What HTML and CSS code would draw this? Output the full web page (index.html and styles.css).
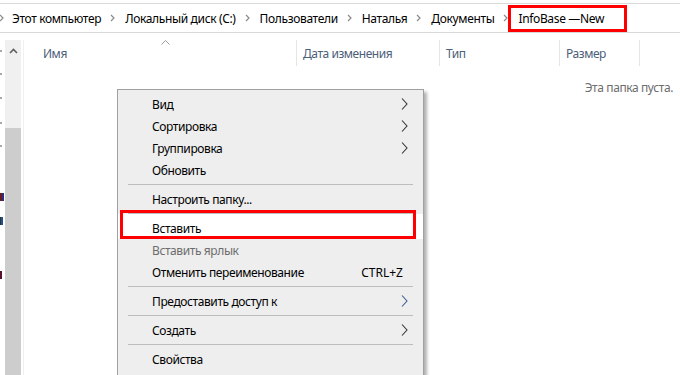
FILE: index.html
```html
<!DOCTYPE html>
<html lang="ru">
<head>
    <meta charset="UTF-8">
    <title>InfoBase —New</title>
    <link rel="stylesheet" href="styles.css">
</head>
<body>
    <div class="window">
        <div class="crumbs">
            <span class="sep"><svg width="5" height="8" viewBox="0 0 5 8"><path d="M1 1l3 3-3 3" fill="none" stroke="#8a8a8a" stroke-width="1.2"/></svg></span>
            <span class="crumb">Этот компьютер</span>
            <span class="sep"><svg width="5" height="8" viewBox="0 0 5 8"><path d="M1 1l3 3-3 3" fill="none" stroke="#8a8a8a" stroke-width="1.2"/></svg></span>
            <span class="crumb">Локальный диск (C:)</span>
            <span class="sep"><svg width="5" height="8" viewBox="0 0 5 8"><path d="M1 1l3 3-3 3" fill="none" stroke="#8a8a8a" stroke-width="1.2"/></svg></span>
            <span class="crumb">Пользователи</span>
            <span class="sep"><svg width="5" height="8" viewBox="0 0 5 8"><path d="M1 1l3 3-3 3" fill="none" stroke="#8a8a8a" stroke-width="1.2"/></svg></span>
            <span class="crumb">Наталья</span>
            <span class="sep"><svg width="5" height="8" viewBox="0 0 5 8"><path d="M1 1l3 3-3 3" fill="none" stroke="#8a8a8a" stroke-width="1.2"/></svg></span>
            <span class="crumb">Документы</span>
            <span class="sep"><svg width="5" height="8" viewBox="0 0 5 8"><path d="M1 1l3 3-3 3" fill="none" stroke="#8a8a8a" stroke-width="1.2"/></svg></span>
            <span class="crumb current">InfoBase —New</span>
        </div>

        <div class="main">
            <div class="nav-strip">
                <i class="dot"></i><i class="dot"></i><i class="dot"></i><i class="dot"></i><i class="dot"></i>
                <i class="frag frag-a"></i>
                <i class="frag frag-b"></i>
                <i class="frag frag-c"></i>
            </div>
            <div class="scrollbar">
                <div class="scroll-up">
                    <svg width="9" height="6" viewBox="0 0 9 6"><path d="M1 5l3.5-3.5L8 5" fill="none" stroke="#606060" stroke-width="1.6"/></svg>
                </div>
                <div class="scroll-thumb"></div>
            </div>
            <div class="content">
                <div class="header-row">
                    <div class="col col-name">Имя
                        <svg class="sort-arrow" width="9" height="5" viewBox="0 0 9 5"><path d="M0.5 4.5l4-4 4 4" fill="none" stroke="#9a9a9a" stroke-width="1"/></svg>
                    </div>
                    <div class="col col-date">Дата изменения</div>
                    <div class="col col-type">Тип</div>
                    <div class="col col-size">Размер</div>
                    <div class="col col-rest"></div>
                </div>
                <p class="empty">Эта папка пуста.</p>
            </div>
        </div>

        <div class="menu">
            <div class="item">Вид<span class="arrow"><svg width="7" height="12" viewBox="0 0 7 12"><path d="M1 0.5l5 5.5-5 5.5" fill="none" stroke="#333" stroke-width="1.1"/></svg></span></div>
            <div class="item">Сортировка<span class="arrow"><svg width="7" height="12" viewBox="0 0 7 12"><path d="M1 0.5l5 5.5-5 5.5" fill="none" stroke="#333" stroke-width="1.1"/></svg></span></div>
            <div class="item">Группировка<span class="arrow"><svg width="7" height="12" viewBox="0 0 7 12"><path d="M1 0.5l5 5.5-5 5.5" fill="none" stroke="#333" stroke-width="1.1"/></svg></span></div>
            <div class="item">Обновить</div>
            <div class="divider"></div>
            <div class="item">Настроить папку...</div>
            <div class="divider"></div>
            <div class="item active">Вставить</div>
            <div class="item disabled">Вставить ярлык</div>
            <div class="item">Отменить переименование<span class="shortcut">CTRL+Z</span></div>
            <div class="divider"></div>
            <div class="item">Предоставить доступ к<span class="arrow"><svg width="7" height="12" viewBox="0 0 7 12"><path d="M1 0.5l5 5.5-5 5.5" fill="none" stroke="#3a5c90" stroke-width="1.1"/></svg></span></div>
            <div class="divider"></div>
            <div class="item">Создать<span class="arrow"><svg width="7" height="12" viewBox="0 0 7 12"><path d="M1 0.5l5 5.5-5 5.5" fill="none" stroke="#333" stroke-width="1.1"/></svg></span></div>
            <div class="divider"></div>
            <div class="item">Свойства</div>
        </div>

        <div class="mark mark-path"></div>
        <div class="mark mark-paste"></div>
    </div>
</body>
</html>
```

FILE: styles.css
```css
body {
    margin: 0;
    padding: 0;
    background: #ffffff;
    font-family: "Noto Sans", "Open Sans", sans-serif;
    font-size: 12px;
    color: #000000;
    overflow: hidden;
}

.window {
    position: relative;
    width: 680px;
    height: 375px;
    overflow: hidden;
}

/* address bar */

.crumbs {
    display: flex;
    align-items: center;
    height: 28px;
    margin-top: 3px;
    border-top: 1px solid #d9d9d9;
    border-bottom: 1px solid #d9d9d9;
    white-space: nowrap;
    letter-spacing: -0.35px;
}

.crumbs .sep {
    display: flex;
    align-items: center;
    padding: 0 10px 0 9px;
}

.crumbs .sep:first-child {
    padding-left: 0;
    padding-right: 8px;
    margin-left: -1px;
}

/* main area */

.main {
    display: flex;
    margin-top: 7px;
    height: 335px;
}

.nav-strip {
    position: relative;
    width: 5px;
    flex: none;
}

.dot {
    position: absolute;
    left: 0;
    width: 2px;
    height: 2px;
    background: #a8a8a8;
}

.dot:nth-child(1) { top: 10px; }
.dot:nth-child(2) { top: 33px; }
.dot:nth-child(3) { top: 57px; }
.dot:nth-child(4) { top: 82px; }
.dot:nth-child(5) { top: 105px; }

.frag {
    position: absolute;
    left: 0;
    width: 4px;
    height: 8px;
}

.frag-a { top: 153px; background: linear-gradient(90deg, #6a1b1b 50%, #2c2c8a 50%); }
.frag-b { top: 177px; background: linear-gradient(90deg, #1f3d1f 50%, #2a4a9a 50%); width: 3px; }
.frag-c { top: 231px; background: linear-gradient(90deg, #5a1030 60%, #ffffff 60%); }

.scrollbar {
    width: 16px;
    flex: none;
    background: #f0f0f0;
    display: flex;
    flex-direction: column;
}

.scroll-up {
    height: 17px;
    display: flex;
    align-items: center;
    justify-content: center;
    padding-top: 2px;
}

.scroll-thumb {
    margin-top: 69px;
    flex: 1;
    background: #cdcdcd;
}

.content {
    flex: 1;
    margin-left: 2px;
    border-left: 1px solid #f0f0f0;
}

.header-row {
    display: flex;
    height: 26px;
    color: #4c607a;
    letter-spacing: -0.45px;
}

.col {
    display: flex;
    align-items: center;
    padding-left: 6px;
    border-right: 1px solid #e5e5e5;
    position: relative;
}

.col-name {
    width: 253px;
    padding-left: 19px;
}

.col-date { width: 136px; }
.col-type { width: 113px; }
.col-size { width: 73px; }

.col-rest {
    flex: 1;
    border-right: none;
}

.sort-arrow {
    position: absolute;
    left: 137px;
    top: 0;
}

.empty {
    margin: 13px 7px 0 0;
    text-align: right;
    color: #6d6d6d;
    letter-spacing: -0.4px;
}

/* context menu */

.menu {
    position: absolute;
    left: 117px;
    top: 89px;
    width: 305px;
    height: 300px;
    background: #eeeeee;
    border: 1px solid #a0a0a0;
    box-shadow: 3px 3px 3px rgba(0, 0, 0, 0.3);
    padding-top: 3px;
    letter-spacing: -0.4px;
}

.item {
    display: flex;
    align-items: center;
    height: 22px;
    padding-left: 34px;
    padding-right: 16px;
}

.item.active {
    background: #ffffff;
    margin-top: -3px;
    height: 25px;
    padding-top: 3px;
    box-sizing: border-box;
}

.item.disabled {
    color: #6d6d6d;
}

.arrow {
    margin-left: auto;
    display: flex;
    margin-right: -1px;
}

.shortcut {
    margin-left: auto;
    margin-right: 4px;
    letter-spacing: 0;
}

.divider {
    height: 1px;
    background: #bdbdbd;
    margin: 3px 10px 3px 10px;
}

/* red annotation frames */

.mark {
    position: absolute;
    border: 3px solid #ff0000;
    box-sizing: border-box;
}

.mark-path {
    left: 508px;
    top: 5px;
    width: 119px;
    height: 27px;
}

.mark-paste {
    left: 120px;
    top: 210px;
    width: 296px;
    height: 29px;
}
```
